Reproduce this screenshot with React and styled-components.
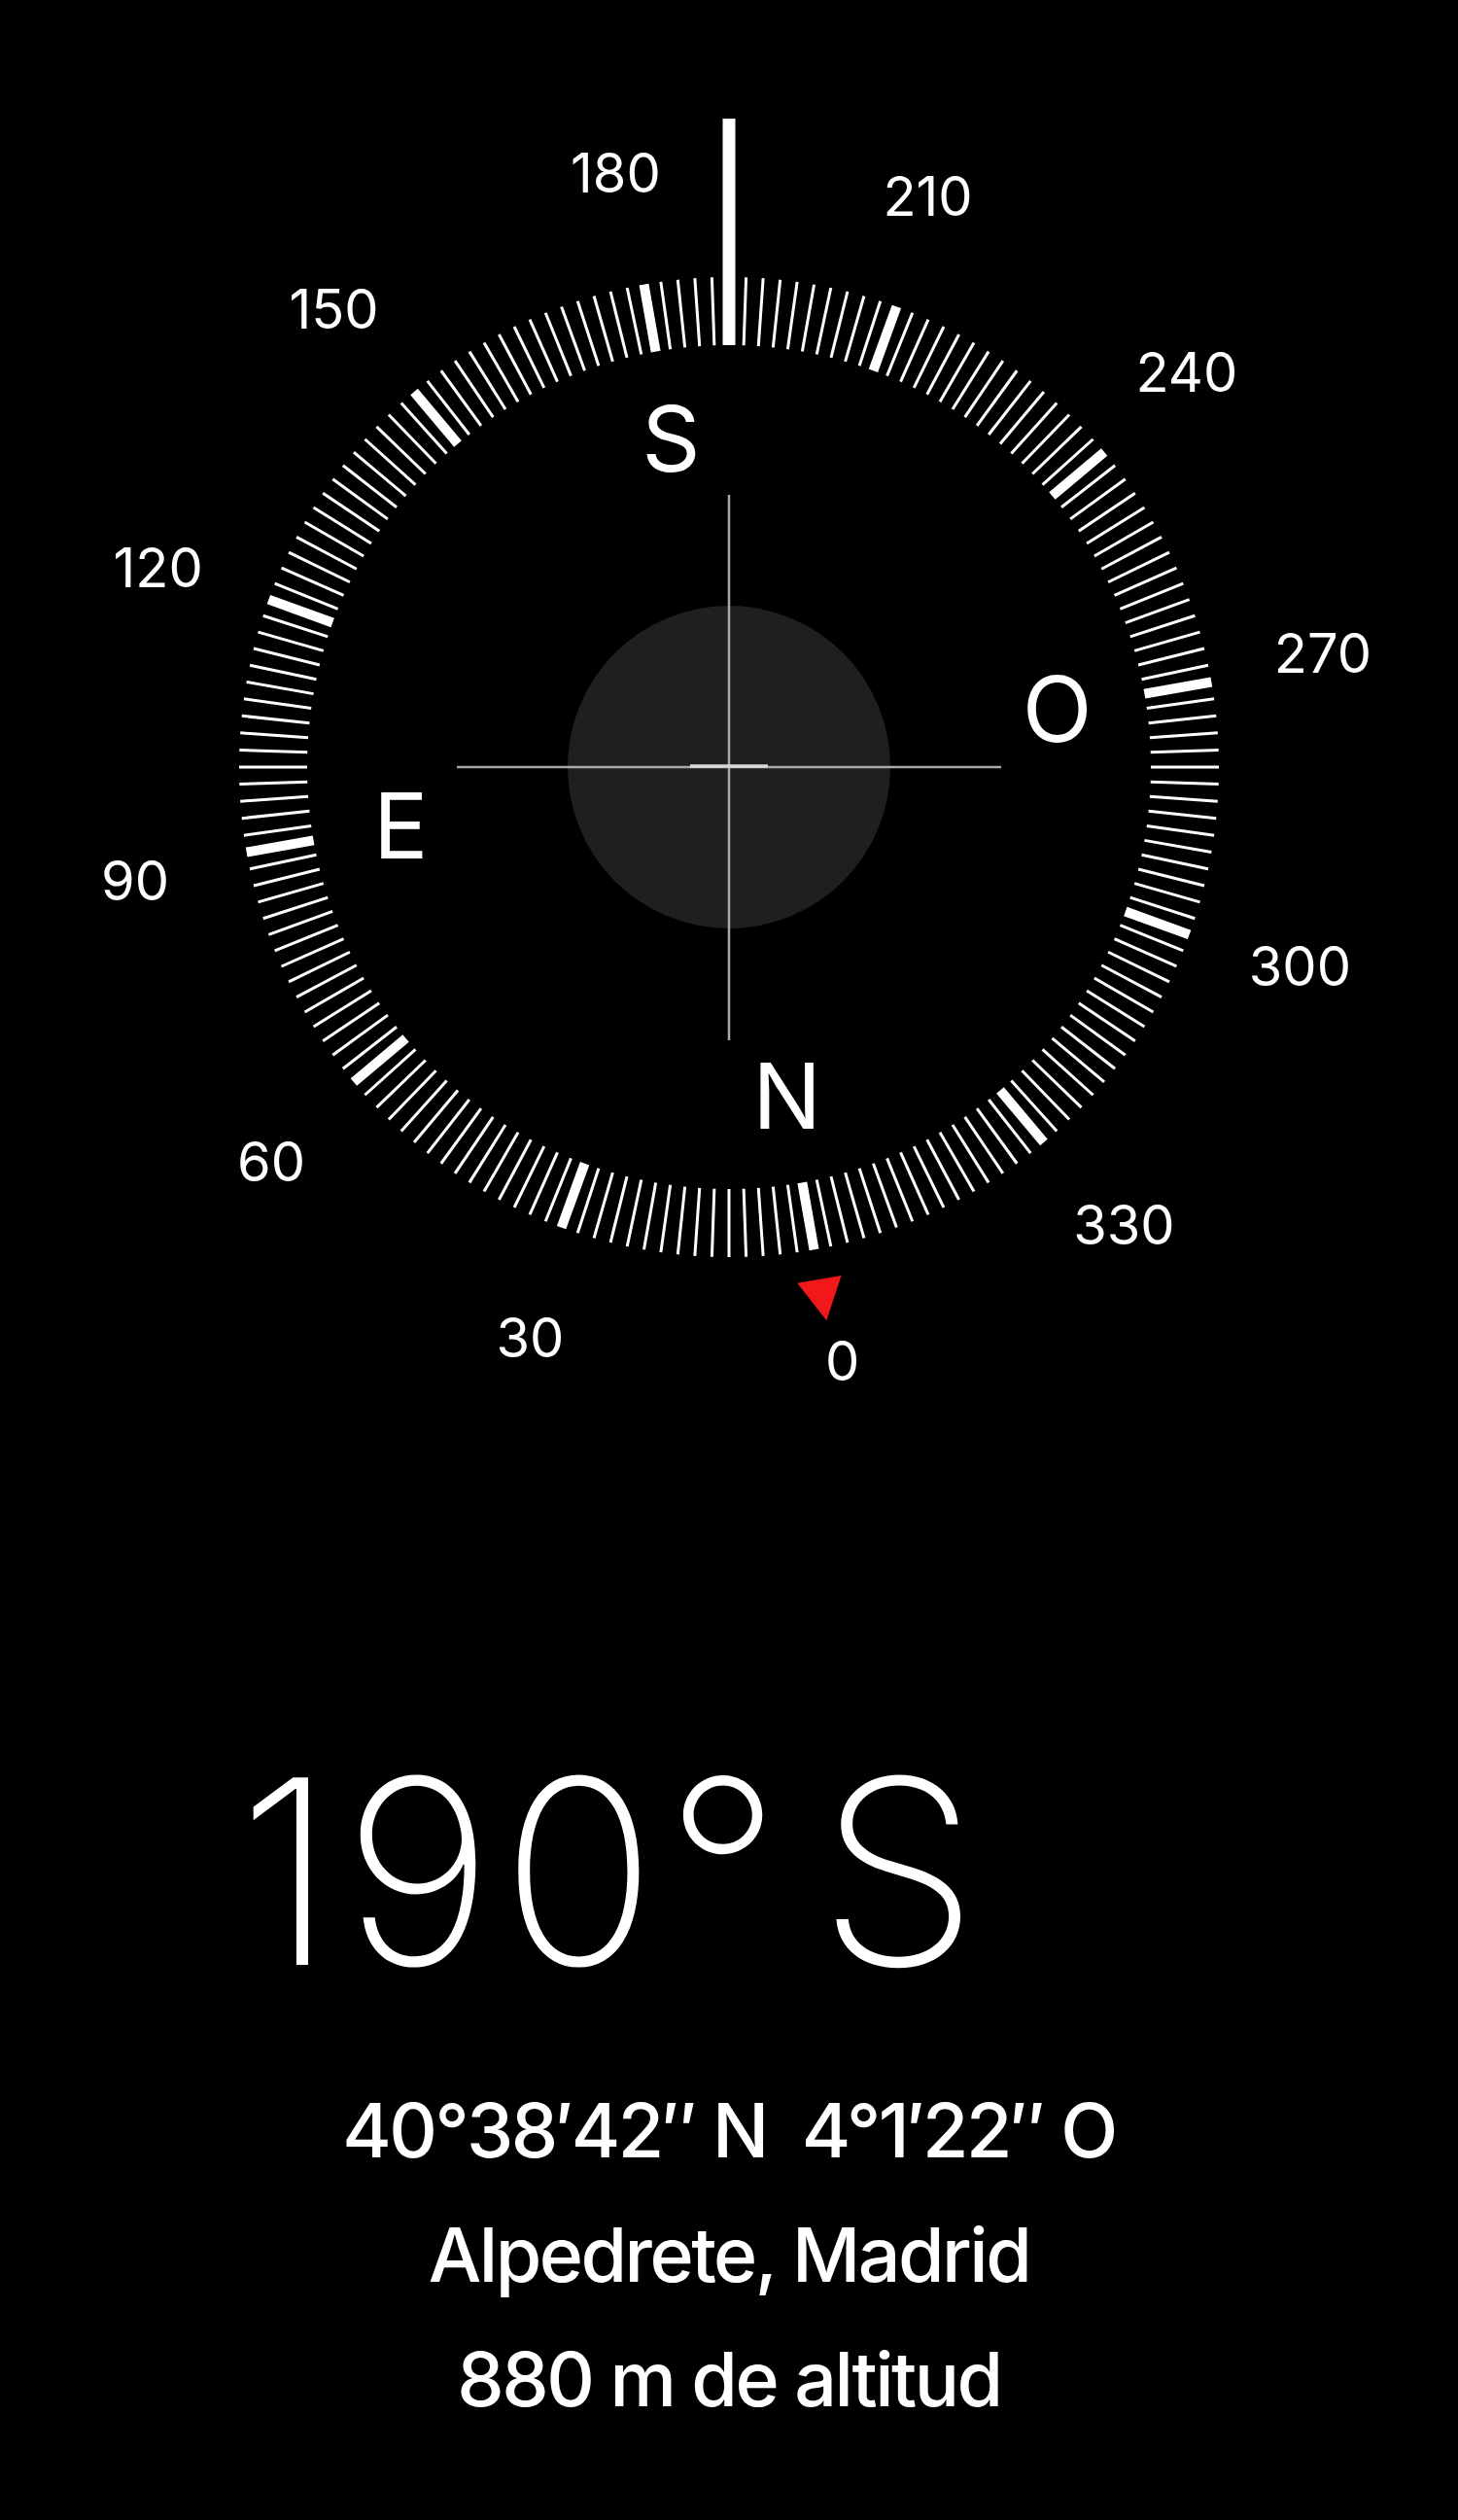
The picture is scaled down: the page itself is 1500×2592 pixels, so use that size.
import React from "react";
import styled, { createGlobalStyle } from "styled-components";

const GlobalStyle = createGlobalStyle`
  html, body {
    margin: 0;
    padding: 0;
    background: #000;
  }
  body {
    font-family: "Inter", "Noto Sans", sans-serif;
    color: #fff;
  }
`;

const HEADING = 190;
const CX = 750;
const CY = 789;
const R_OUT = 504;
const R_IN = 434;
const R_LABEL = 622;
const R_CARD = 343;
const LABEL_SHIFT = -0.8;

const Page = styled.div`
  width: 1500px;
  min-height: 2592px;
  background: #000;
  display: flex;
  flex-direction: column;
`;

const Dial = styled.svg`
  display: block;
  width: 1500px;
  height: 1500px;
  flex: none;

  text {
    font-family: "Inter", "Noto Sans", sans-serif;
    fill: #fff;
  }
`;

const Heading = styled.div`
  margin-top: 292px;
  padding-left: 244px;
  display: flex;
  align-items: baseline;
  gap: 30px;
  font-family: "Inter", "Noto Sans", sans-serif;
  font-weight: 200;
  font-size: 265px;
  line-height: 1;
  height: 265px;
  white-space: pre;
`;

const Degrees = styled.span`
  letter-spacing: 8px;
`;

const Direction = styled.span`
  letter-spacing: 0;
`;

const Info = styled.div`
  margin-top: 70px;
  display: flex;
  flex-direction: column;
  align-items: center;
`;

const InfoLine = styled.div`
  font-family: "Inter", "Noto Sans", sans-serif;
  font-weight: 500;
  font-size: 77px;
  line-height: 128px;
  letter-spacing: -2.5px;
  white-space: pre;
`;

const rot = (deg) => `rotate(${deg - HEADING} ${CX} ${CY})`;

const polar = (deg, r, shift = 0) => {
  const a = ((deg - HEADING + shift) * Math.PI) / 180;
  return { x: CX + r * Math.sin(a), y: CY - r * Math.cos(a) };
};

const ticks = Array.from({ length: 180 }, (_, i) => i * 2);
const labels = Array.from({ length: 12 }, (_, i) => i * 30);
const cardinals = [
  { d: 0, t: "N" },
  { d: 90, t: "E" },
  { d: 180, t: "S" },
  { d: 270, t: "O" },
];

function Compass() {
  return (
    <Dial viewBox="0 0 1500 1500">
      {ticks.map((d) => {
        const major = d % 30 === 0;
        return (
          <line
            key={d}
            x1={CX}
            y1={CY - R_OUT}
            x2={CX}
            y2={CY - R_IN}
            stroke="#fff"
            strokeWidth={major ? 10 : 3}
            transform={rot(d)}
          />
        );
      })}

      {labels.map((d) => {
        const p = polar(d, R_LABEL, LABEL_SHIFT);
        return (
          <text
            key={d}
            x={p.x}
            y={p.y + 20}
            fontSize="56"
            textAnchor="middle"
          >
            {d}
          </text>
        );
      })}

      {cardinals.map(({ d, t }) => {
        const p = polar(d, R_CARD);
        return (
          <text
            key={t}
            x={p.x}
            y={p.y + 34}
            fontSize="94"
            textAnchor="middle"
          >
            {t}
          </text>
        );
      })}

      <polygon
        points={`${CX - 23},${CY - 535} ${CX + 23},${CY - 535} ${CX},${CY - 578}`}
        fill="#f2171b"
        transform={rot(0)}
      />

      <circle cx={CX} cy={CY} r="166" fill="#1f1f1f" />
      <line x1={CX - 280} y1={CY} x2={CX + 280} y2={CY} stroke="#a8a8a8" strokeWidth="2.5" />
      <line x1={CX} y1={CY - 280} x2={CX} y2={CY + 281} stroke="#a8a8a8" strokeWidth="2.5" />
      <line x1={CX - 40} y1={CY - 1} x2={CX + 40} y2={CY - 1} stroke="#d8d8d8" strokeWidth="3.5" />

      <rect x={CX - 6.5} y="122" width="13" height="233" fill="#fff" />
    </Dial>
  );
}

export default function App() {
  return (
    <>
      <GlobalStyle />
      <Page>
        <Compass />
        <Heading>
          <Degrees>190°</Degrees>
          <Direction>S</Direction>
        </Heading>
        <Info>
          <InfoLine>40°38′42″ N  4°1′22″ O</InfoLine>
          <InfoLine>Alpedrete, Madrid</InfoLine>
          <InfoLine>880 m de altitud</InfoLine>
        </Info>
      </Page>
    </>
  );
}
